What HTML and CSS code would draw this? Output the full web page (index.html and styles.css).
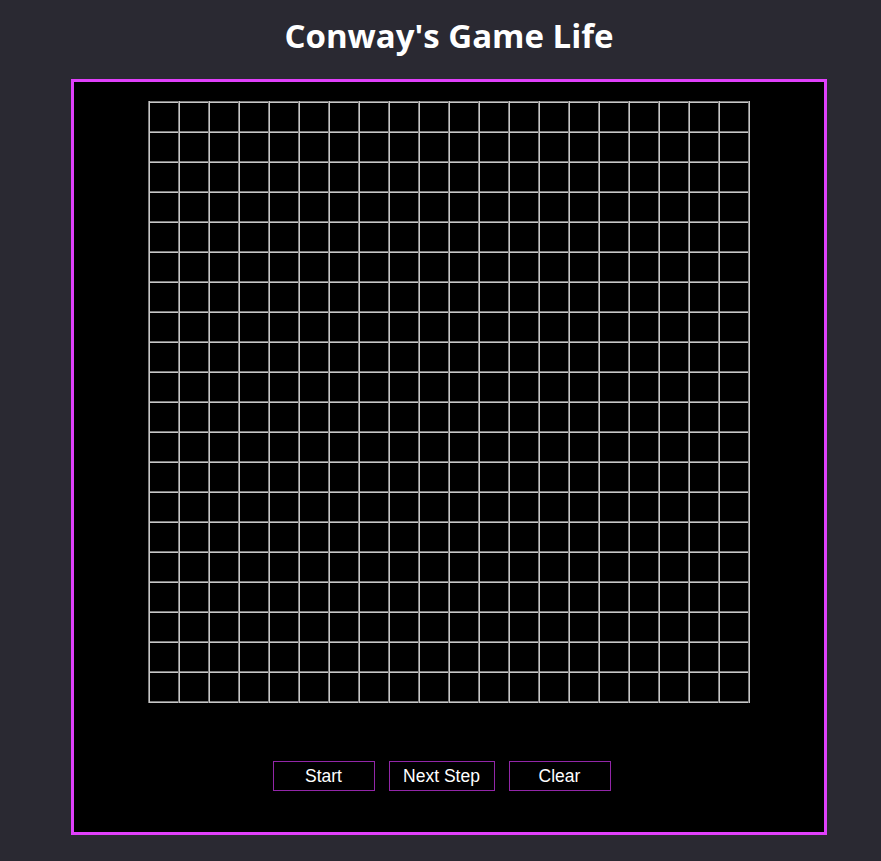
FILE: index.html
```html
<!DOCTYPE html>
<html lang="en">
<head>
<meta charset="utf-8">
<title>Conway's Game Life</title>
<link rel="stylesheet" href="styles.css">
</head>
<body>
<div class="page">
  <h1 class="title">Conway's Game Life</h1>
  <div class="board">
    <div class="grid"></div>
    <div class="controls">
      <button class="btn btn-start">Start</button>
      <button class="btn btn-next">Next Step</button>
      <button class="btn btn-clear">Clear</button>
    </div>
  </div>
</div>
</body>
</html>
```

FILE: styles.css
```css
html, body {
  margin: 0;
  padding: 0;
  background: #2a2932;
}
.page {
  width: 756px;
  margin-left: 71px;
  display: flex;
  flex-direction: column;
}
.title {
  margin: 0;
  height: 79px;
  box-sizing: border-box;
  padding-top: 16px;
  text-align: center;
  color: #fff;
  font-family: "Open Sans", "DejaVu Sans", sans-serif;
  font-weight: 700;
  font-size: 33px;
  line-height: 40px;
  letter-spacing: 0;
}
.board {
  box-sizing: border-box;
  width: 756px;
  height: 756px;
  border: 3px solid #e040fb;
  background: #000;
  display: flex;
  flex-direction: column;
  align-items: center;
  padding-top: 19px;
}
.grid {
  width: 602px;
  height: 602px;
  background-image:
    linear-gradient(to right, #7c7c7c 0, #7c7c7c 1px, #c8c8c8 1px, #c8c8c8 2px, transparent 2px),
    linear-gradient(to bottom, #7c7c7c 0, #7c7c7c 1px, #c8c8c8 1px, #c8c8c8 2px, transparent 2px);
  background-size: 30px 30px;
  background-position: 0 0;
}
.controls {
  margin-top: 58px;
  margin-right: 15px;
  display: flex;
  gap: 14px;
}
.btn {
  box-sizing: border-box;
  height: 30px;
  background: #000;
  color: #fff;
  border: 1px solid #9226a8;
  font-family: "Liberation Sans", Arial, sans-serif;
  font-size: 17.5px;
  padding: 0;
  cursor: pointer;
}
.btn-start, .btn-clear { width: 102px; }
.btn-next { width: 106px; }
```
